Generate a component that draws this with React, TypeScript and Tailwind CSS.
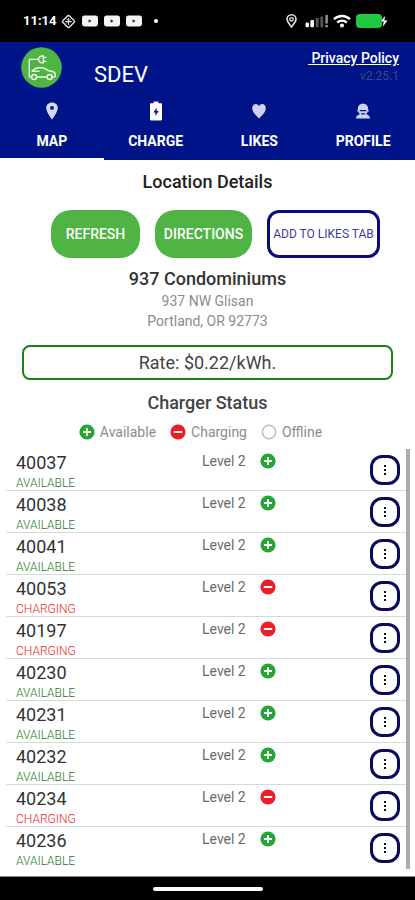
import React from "react";

type Status = "available" | "charging" | "offline";

type Charger = {
  id: string;
  level: string;
  status: Status;
};

const chargers: Charger[] = [
  { id: "40037", level: "Level 2", status: "available" },
  { id: "40038", level: "Level 2", status: "available" },
  { id: "40041", level: "Level 2", status: "available" },
  { id: "40053", level: "Level 2", status: "charging" },
  { id: "40197", level: "Level 2", status: "charging" },
  { id: "40230", level: "Level 2", status: "available" },
  { id: "40231", level: "Level 2", status: "available" },
  { id: "40232", level: "Level 2", status: "available" },
  { id: "40234", level: "Level 2", status: "charging" },
  { id: "40236", level: "Level 2", status: "available" },
];

function StatusIcon({ status }: { status: Status }) {
  return (
    <svg className="size-4 shrink-0" viewBox="0 0 16 16" fill="none">
      {status === "offline" ? (
        <circle cx="8" cy="8" r="6.7" stroke="#bdbdbd" strokeWidth="1.5" />
      ) : (
        <circle
          cx="8"
          cy="8"
          r="7.6"
          fill={status === "available" ? "#25a532" : "#ee1c25"}
        />
      )}
      {status === "available" ? (
        <path d="M8 4v8M4 8h8" stroke="#fff" strokeWidth="1.9" />
      ) : undefined}
      {status === "charging" ? (
        <path d="M3.8 8h8.4" stroke="#fff" strokeWidth="2" />
      ) : undefined}
    </svg>
  );
}

function Logo() {
  return (
    <svg className="size-[41px]" viewBox="0 0 41 41" fill="none">
      <circle cx="20.5" cy="20.5" r="20.3" fill="#4fb443" />
      <g
        stroke="#e9f8e4"
        strokeWidth="1.4"
        strokeLinecap="round"
        strokeLinejoin="round"
      >
        <path d="M17.5 12.400H8.300v17.600h2" />
        <path d="M17.500 12.400c.4-2.100 1.700-3.400 3.700-3.400h1.200v6.900h-1.200c-2 0-3.300-1.300-3.700-3.500z" />
        <path d="M22.400 10.400h2.500M22.400 14.400h2.500" />
        <path d="M15.700 30h10.400M31.300 30h1.700c1 0 1.300-.5 1.300-1.300v-1.300c0-1.800-1.200-2.600-3.600-3.100l-3.600-.8c-2-1.700-3.700-2.700-6.200-2.700h-3.400c-2.500 0-4.300 1.200-6 2.900" />
        <path d="M11 24.300h7" />
        <circle cx="13.100" cy="30" r="2.500" />
        <circle cx="28.700" cy="30" r="2.500" />
      </g>
    </svg>
  );
}

function VideoIcon() {
  return (
    <svg className="h-3 w-4" viewBox="0 0 16 12">
      <rect x="0" y="0.5" width="16" height="11" rx="2.4" fill="#f4f4f4" />
      <path d="M6.6 4.200v3.600L9.600 6z" fill="#222" />
    </svg>
  );
}

function StatusBar() {
  return (
    <div className="h-[42px] bg-black flex items-center justify-between pl-[23px] pr-[27px] text-white">
      <div className="flex items-center gap-[6px]">
        <span className="w-8 text-[13px] leading-5 font-bold font-[Roboto] whitespace-nowrap">
          11:14
        </span>
        <svg className="size-[15px]" viewBox="0 0 15 15" fill="none">
          <rect
            x="2.9"
            y="2.9"
            width="9.2"
            height="9.2"
            rx="1.4"
            transform="rotate(45 7.5 7.5)"
            stroke="#ddd"
            strokeWidth="1.5"
          />
          <path
            d="M4.2 7.5h6.6M7.5 4.2v6.6M5.6 4.8l4 4M5 9.5l4.4-4.4"
            stroke="#ddd"
            strokeWidth="1"
          />
        </svg>
        <VideoIcon />
        <VideoIcon />
        <VideoIcon />
        <span className="ml-[6px] size-1 rounded-full bg-white" />
      </div>
      <div className="flex items-center">
        <svg className="w-[11px] h-[14px]" viewBox="0 0 11 14" fill="none">
          <path
            d="M5.5 13C3.2 9.800 1 7.800 1 5.300a4.500 4.500 0 0 1 9 0c0 2.500-2.200 4.500-4.500 7.700z"
            stroke="#ddd"
            strokeWidth="1.6"
          />
          <circle cx="5.5" cy="5.3" r="1.7" stroke="#ddd" strokeWidth="1.4" />
        </svg>
        <svg className="ml-2 w-6 h-[14px]" viewBox="0 0 24 14">
          <rect x="0.5" y="8.5" width="3.5" height="4.8" rx="1.4" fill="#fff" />
          <rect x="5.4" y="6" width="3.6" height="7.3" rx="1.2" fill="#fff" />
          <rect x="10.7" y="4" width="3" height="9.3" fill="#555" />
          <rect x="15.4" y="2.5" width="2.8" height="10.8" fill="#555" />
          <rect x="20.4" y="1" width="2.4" height="8.5" fill="#999" />
          <rect x="20.4" y="11" width="2.4" height="2.3" fill="#999" />
        </svg>
        <svg className="ml-1 w-[18px] h-[14px]" viewBox="0 0 18 14" fill="none">
          <path
            d="M1 5.2a11.6 11.6 0 0 1 16 0M4.2 8.6a7 7 0 0 1 9.6 0"
            stroke="#fff"
            strokeWidth="2.3"
          />
          <circle cx="9" cy="11.6" r="2" fill="#fff" />
        </svg>
        <svg className="ml-[5px] w-8 h-[14px]" viewBox="0 0 32 14">
          <rect x="0" y="0" width="26" height="14" rx="4" fill="#1fc943" />
          <path
            d="M29.500 1.200 24 7.800h3.400L26.500 13.200 32 6.200h-3.400z"
            fill="#fff"
            stroke="#000"
            strokeWidth="0.4"
          />
        </svg>
      </div>
    </div>
  );
}

const tabs = [
  {
    name: "MAP",
    icon: (
      <path
        d="M10 1.5c-3.4 0-5.8 2.4-5.8 5.6 0 4 5.8 11.6 5.8 11.6s5.8-7.6 5.8-11.6c0-3.2-2.4-5.6-5.8-5.6zM10 5a1.9 1.9 0 1 1 0 3.8A1.9 1.9 0 0 1 10 5z"
        fill="#d5d8f3"
        fillRule="evenodd"
      />
    ),
  },
  {
    name: "CHARGE",
    icon: (
      <path
        d="M7.6.4h4.8v1.8h2.5c.7 0 1.1.4 1.1 1.1v15c0 .7-.4 1.2-1.1 1.2H5.1c-.7 0-1.1-.5-1.1-1.2v-15c0-.7.4-1.1 1.1-1.1h2.5zM10.7 6.800l-3.300 4.800h2v3.400l3.300-5h-2z"
        fill="#fff"
        fillRule="evenodd"
      />
    ),
  },
  {
    name: "LIKES",
    icon: (
      <path
        d="M10 17.500C6 13.700 3.200 10.700 3.200 7.300c0-2.500 1.500-4.300 3.600-4.300 1.400 0 2.500.8 3.200 2.200.7-1.400 1.800-2.200 3.200-2.200 2.100 0 3.600 1.800 3.600 4.300 0 3.400-2.800 6.400-6.800 10.200z"
        fill="#ced2f0"
      />
    ),
  },
  {
    name: "PROFILE",
    icon: (
      <path
        d="M10 2.800c-3 0-5.100 1.900-5.100 4.700v1.300H4.300v1.600h1.200c.2 1.300.7 2.200 1.600 2.900-2.500.5-4.200 1.900-4.200 4.200h14.200c0-2.300-1.700-3.700-4.200-4.200.9-.7 1.400-1.600 1.600-2.900h1.200V8.800h-.6V7.500c0-2.800-2.100-4.700-5.100-4.700zM6.800 9.100h6.400v1.100H6.800zM7.700 12.300h4.600l-.8 1.200h-3z"
        fill="#ced2f0"
        fillRule="evenodd"
      />
    ),
  },
];

function Header({
  tab,
  setTab,
}: {
  tab: string;
  setTab: (name: string) => void;
}) {
  return (
    <header className="bg-[#001489] text-white">
      <div className="h-[54px] flex items-start justify-between pl-[21px] pr-4">
        <div className="flex items-start gap-8 pt-[5px]">
          <Logo />
          <h1 className="pt-3 text-[22px] leading-8">SDEV</h1>
        </div>
        <div className="flex flex-col items-end pt-[6px]">
          <a
            className="text-sm leading-5 font-medium underline whitespace-pre"
            href="#privacy"
          >
            {" Privacy Policy"}
          </a>
          <span className="text-xs leading-4 text-[#3d4a80]">v2.25.1</span>
        </div>
      </div>
      <nav className="grid grid-cols-4">
        {tabs.map(({ name, icon }) => (
          <button
            key={name}
            className={
              name === tab
                ? "h-16 pt-[5px] flex flex-col items-center gap-[10px] border-b-2 border-white"
                : "h-16 pt-[5px] flex flex-col items-center gap-[10px] border-b-2 border-transparent"
            }
            type="button"
            onClick={() => setTab(name)}
          >
            <svg className="size-5" viewBox="0 0 20 20">
              {icon}
            </svg>
            <span className="text-sm leading-5 font-bold">{name}</span>
          </button>
        ))}
      </nav>
    </header>
  );
}

function ChargerRow({ charger }: { charger: Charger }) {
  return (
    <li className="h-[42px] grid grid-cols-[186fr_168fr_30px] items-start pl-[10px] pr-[6px] border-b border-[#d8d8d8] last:border-transparent">
      <div className="flex flex-col pt-1">
        <span className="text-lg leading-5 text-[#333]">{charger.id}</span>
        <span
          className={
            charger.status === "available"
              ? "text-xs leading-5 font-light text-[#1b7a22]"
              : "text-xs leading-5 font-light text-[#f01c25]"
          }
        >
          {charger.status.toUpperCase()}
        </span>
      </div>
      <div className="flex items-center gap-[14px] pt-[2px]">
        <span className="text-sm leading-5 text-[#6b6b6b]">
          {charger.level}
        </span>
        <StatusIcon status={charger.status} />
      </div>
      <button
        className="mt-[6px] size-[30px] border-3 border-[#0a0a5c] rounded-xl flex items-center justify-center"
        type="button"
        aria-label={`Options for ${charger.id}`}
      >
        <svg className="h-3 w-1" viewBox="0 0 4 12" fill="#111">
          <rect x="1" y="1" width="2" height="2" />
          <rect x="1" y="5" width="2" height="2" />
          <rect x="1" y="9" width="2" height="2" />
        </svg>
      </button>
    </li>
  );
}

export default function App() {
  const [tab, setTab] = React.useState("MAP");

  return (
    <div className="min-h-screen flex flex-col bg-white font-[Roboto,sans-serif]">
      <StatusBar />
      <Header tab={tab} setTab={setTab} />
      <main className="flex-grow flex flex-col pt-[10px]">
        <h2 className="text-center text-lg leading-6 font-medium text-[#222]">
          Location Details
        </h2>
        <div className="mt-4 pl-4 flex justify-center gap-[15px]">
          <button
            className="h-12 w-[89px] rounded-[20px] bg-[#4fb443] text-sm font-medium text-white"
            type="button"
          >
            REFRESH
          </button>
          <button
            className="h-12 w-[97px] rounded-[20px] bg-[#4fb443] text-sm font-medium text-white"
            type="button"
          >
            DIRECTIONS
          </button>
          <button
            className="h-12 w-[113px] border-3 border-[#0c0c78] rounded-xl text-xs text-[#3c3c96] whitespace-nowrap"
            type="button"
          >
            ADD TO LIKES TAB
          </button>
        </div>
        <div className="mt-[9px] text-center">
          <h3 className="text-lg leading-6 font-medium text-[#333]">
            937 Condominiums
          </h3>
          <p className="text-sm leading-5 text-[#8c8c8c]">937 NW Glisan</p>
          <p className="text-sm leading-5 text-[#8c8c8c]">Portland, OR 92773</p>
        </div>
        <div className="mt-[14px] mx-[22px] h-[35px] border-2 border-[#1a801c] rounded-lg flex items-center justify-center text-lg leading-6 text-[#444]">
          Rate: $0.22/kWh.
        </div>
        <h3 className="mt-[11px] text-center text-lg leading-6 font-medium text-[#444]">
          Charger Status
        </h3>
        <div className="mt-[7px] pr-[14px] flex justify-center gap-[14px] text-sm leading-5 text-[#8c8c8c]">
          <span className="flex items-center gap-[5px]">
            <StatusIcon status="available" />
            Available
          </span>
          <span className="flex items-center gap-[5px]">
            <StatusIcon status="charging" />
            Charging
          </span>
          <span className="flex items-center gap-[5px]">
            <StatusIcon status="offline" />
            Offline
          </span>
        </div>
        <ul className="mt-[7px] ml-[6px] mr-[5px] border-r-4 border-[#ababab]">
          {chargers.map((charger) => (
            <ChargerRow key={charger.id} charger={charger} />
          ))}
        </ul>
      </main>
      <footer className="h-6 shrink-0 bg-black border-t border-[#888] flex items-center justify-center">
        <div className="h-1 w-[110px] rounded-full bg-white" />
      </footer>
    </div>
  );
}
